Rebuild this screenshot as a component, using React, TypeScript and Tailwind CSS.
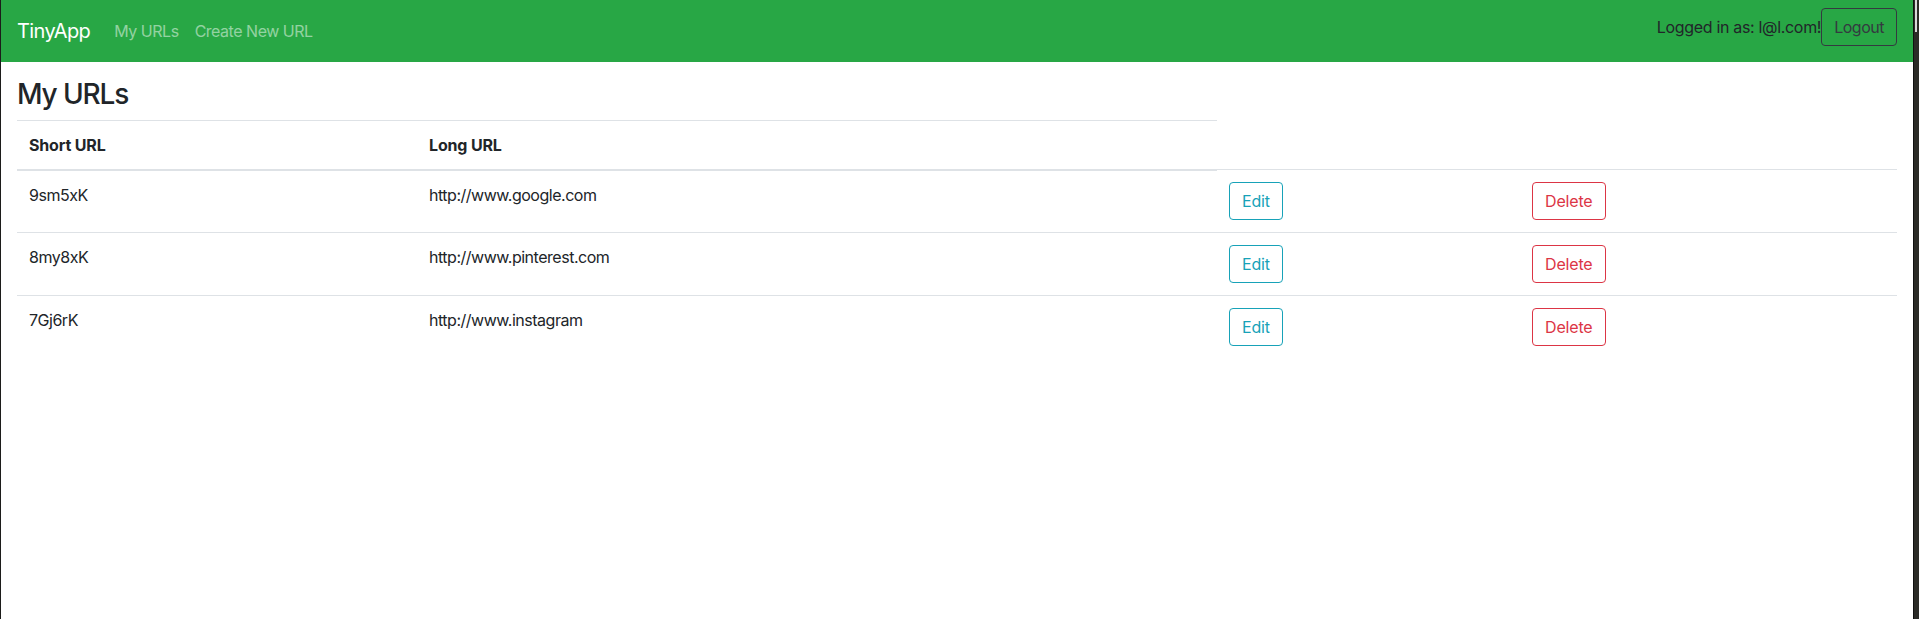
const urls = [
  { id: "9sm5xK", longURL: "http://www.google.com" },
  { id: "8my8xK", longURL: "http://www.pinterest.com" },
  { id: "7Gj6rK", longURL: "http://www.instagram" },
];

function Header() {
  return (
    <nav className="h-[62px] bg-[#28a745] px-4 flex justify-between">
      <div className="flex items-center">
        <a href="#" className="text-[20px] leading-[30px] text-white mr-4 tracking-[-0.03em]">
          TinyApp
        </a>
        <a href="#" className="px-2 text-base leading-6 text-white/50">
          My URLs
        </a>
        <a href="#" className="px-2 text-base leading-6 text-white/50">
          Create New URL
        </a>
      </div>
      <form className="flex items-center self-start mt-2">
        <span className="text-base leading-6 text-[#212529] tracking-[-0.02em]">Logged in as: l@l.com!</span>
        <button
          type="button"
          className="px-3 py-1.5 text-base leading-6 text-[#343a40] border border-[#343a40] rounded"
        >
          Logout
        </button>
      </form>
    </nav>
  );
}

export default function App() {
  return (
    <div
      className="flex h-screen bg-white text-[#212529] tracking-[-0.03em]"
      style={{ fontFamily: "Inter, 'Noto Sans', sans-serif" }}
    >
      <div className="w-px bg-[#1c1c1a]" />
      <main className="flex-1 min-w-0">
        <Header />
        <div className="px-4 pt-4">
          <h3 className="text-[28px] leading-[1.2] font-medium mb-2 tracking-[-0.04em]">My URLs</h3>
          <table className="w-full border-collapse text-base leading-6">
            <colgroup>
              <col className="w-[400px]" />
              <col className="w-[800px]" />
              <col className="w-[303px]" />
              <col />
            </colgroup>
            <thead>
              <tr>
                <th className="p-3 text-left font-bold tracking-[-0.01em] align-bottom border-t border-b-2 border-[#dee2e6]">
                  Short URL
                </th>
                <th className="p-3 text-left font-bold tracking-[-0.01em] align-bottom border-t border-b-2 border-[#dee2e6]">
                  Long URL
                </th>
              </tr>
            </thead>
            <tbody>
              {urls.map((u) => (
                <tr key={u.id}>
                  <td className="p-3 align-top border-t border-[#dee2e6]">{u.id}</td>
                  <td className="p-3 align-top border-t border-[#dee2e6]">{u.longURL}</td>
                  <td className="p-3 align-top border-t border-[#dee2e6]">
                    <button className="px-3 py-1.5 leading-6 tracking-[-0.01em] text-[#17a2b8] border border-[#17a2b8] rounded">
                      Edit
                    </button>
                  </td>
                  <td className="p-3 align-top border-t border-[#dee2e6]">
                    <button className="px-3 py-1.5 leading-6 tracking-[-0.01em] text-[#dc3545] border border-[#dc3545] rounded">
                      Delete
                    </button>
                  </td>
                </tr>
              ))}
            </tbody>
          </table>
        </div>
      </main>
      <div className="w-[6px] flex bg-[#2b2b27] border-l border-[#111]">
        <div className="ml-[1px] w-[2px] h-8 bg-[#d8d8d8]" />
      </div>
    </div>
  );
}
